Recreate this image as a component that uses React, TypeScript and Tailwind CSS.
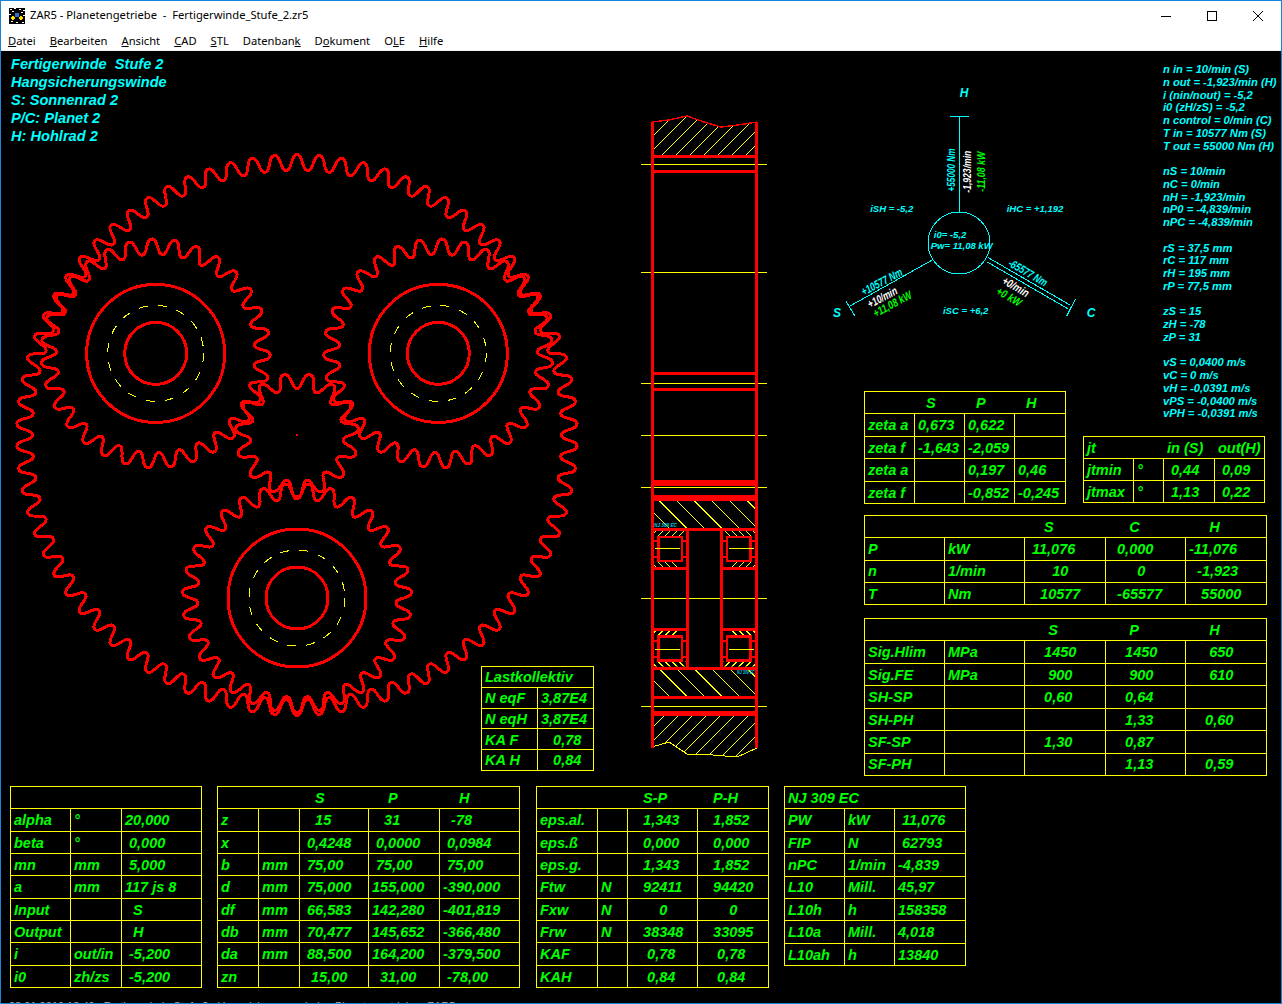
const RED = '#ff0000';
const YEL = '#ffff00';
const CYAN = '#00ffff';
const GREEN = '#00ff00';

const menu = [
  ['D', 'atei', ''],
  ['B', 'earbeiten', ''],
  ['A', 'nsicht', ''],
  ['C', 'AD', ''],
  ['S', 'TL', ''],
  ['', 'Datenban', 'k'],
  ['', 'D', 'o', 'kument'],
  ['', 'O', 'L', 'E'],
  ['H', 'ilfe', ''],
];

const info = [
  'n in = 10/min (S)', 'n out = -1,923/min (H)', 'i (nin/nout) = -5,2', 'i0 (zH/zS) = -5,2', 'n control = 0/min (C)',
  'T in = 10577 Nm (S)', 'T out = 55000 Nm (H)', '',
  'nS = 10/min', 'nC = 0/min', 'nH = -1,923/min', 'nP0 = -4,839/min', 'nPC = -4,839/min', '',
  'rS = 37,5 mm', 'rC = 117 mm', 'rH = 195 mm', 'rP = 77,5 mm', '',
  'zS = 15', 'zH = -78', 'zP = 31', '',
  'vS = 0,0400 m/s', 'vC = 0 m/s', 'vH = -0,0391 m/s', 'vPS = -0,0400 m/s', 'vPH = -0,0391 m/s',
];

// gear outline, tipDeg = direction of the largest radius (svg coords)
function gearPath(cx: number, cy: number, z: number, rMin: number, rMax: number, tipDeg: number) {
  const mid = (rMin + rMax) / 2;
  const amp = (rMax - rMin) / 2;
  const t0 = (tipDeg * Math.PI) / 180;
  const n = z * 20;
  let d = '';
  for (let i = 0; i <= n; i++) {
    const a = (i / n) * Math.PI * 2;
    const c = Math.cos(z * (a - t0));
    const r = mid + amp * (Math.tanh(1.2 * c) / Math.tanh(1.2));
    d += `${i ? 'L' : 'M'}${(cx + r * Math.cos(a)).toFixed(2)} ${(cy + r * Math.sin(a)).toFixed(2)}`;
  }
  return d + 'Z';
}

function Planet({ x, y, tip }: { x: number; y: number; tip: number }) {
  return (
    <g>
      <path d={gearPath(x, y, 31, 99.2, 114.5, tip)} fill="none" stroke={RED} strokeWidth={3} />
      <circle cx={x} cy={y} r={69} fill="none" stroke={RED} strokeWidth={3} />
      <circle cx={x} cy={y} r={31} fill="none" stroke={RED} strokeWidth={3} />
      <circle cx={x} cy={y} r={48} fill="none" stroke={YEL} strokeWidth={1} strokeDasharray="9 10" />
    </g>
  );
}

function Gears() {
  return (
    <svg viewBox="1 51 639 735" className="block w-[639px] h-[735px]" shapeRendering="crispEdges">
      <path d={gearPath(297, 435, 78, 264.7, 280.3, 90)} fill="none" stroke={RED} strokeWidth={3} />
      <path d={gearPath(297, 435, 15, 46.4, 61.7, 90)} fill="none" stroke={RED} strokeWidth={3} />
      <Planet x={155.7} y={353.4} tip={210} />
      <Planet x={438.3} y={353.4} tip={330} />
      <Planet x={297} y={598} tip={90} />
      <rect x={296} y={434} width={2} height={2} fill={RED} />
    </svg>
  );
}

// hatch lines: dir 1 = "/", dir -1 = "\"
function Hatch({ clip, from, step, count, dir }: { clip: string; from: number; step: number; count: number; dir: 1 | -1 }) {
  const lines = [];
  for (let i = 0; i < count; i++) {
    const c = from + i * step;
    lines.push(
      dir === 1 ? (
        <line key={i} x1={640} y1={c - 640} x2={770} y2={c - 770} />
      ) : (
        <line key={i} x1={640} y1={c + 640} x2={770} y2={c + 770} />
      ),
    );
  }
  return (
    <g clipPath={`url(#${clip})`} stroke={YEL} strokeWidth={1}>
      {lines}
    </g>
  );
}

function Bearing() {
  return (
    <g>
      <Hatch clip="bTop" from={1180} step={7} count={8} dir={1} />
      <Hatch clip="bBot" from={-110} step={7} count={8} dir={-1} />
      <rect x={658.7} y={537} width={23.2} height={24} fill="none" stroke={RED} strokeWidth={2.8} />
      <rect x={654} y={539.5} width={4} height={2.4} fill={RED} />
      <rect x={654} y={555.5} width={4} height={2.6} fill={RED} />
      <rect x={682} y={539.5} width={4} height={2.4} fill={RED} />
      <rect x={682} y={555.5} width={4} height={2.6} fill={RED} />
      <rect x={654} y={567} width={33} height={2.6} fill={RED} />
      <line x1={655} y1={548.5} x2={680} y2={548.5} stroke={YEL} strokeWidth={1} />
    </g>
  );
}

function Section() {
  const thick = [
    [155, 3], [170, 3], [372, 3], [388, 3], [480, 6], [495, 6], [528, 3], [667, 3], [696, 3], [711, 5],
  ];
  return (
    <svg viewBox="640 51 180 735" className="block w-[180px] h-[735px]" shapeRendering="crispEdges">
      <defs>
        <clipPath id="topRing"><polygon points="654,122 669,120 687,116 704,122 721,127 738,125 755,122 755,155 654,155" /></clipPath>
        <clipPath id="botRing"><polygon points="654,716 755,716 755,748 737,757 713,755 687,754 669,742 654,747" /></clipPath>
        <clipPath id="carTop"><rect x={654} y={501} width={101} height={27} /></clipPath>
        <clipPath id="carBot"><rect x={654} y={670} width={101} height={26} /></clipPath>
        <clipPath id="bTop"><rect x={654} y={531} width={32} height={5} /></clipPath>
        <clipPath id="bBot"><rect x={654} y={562} width={32} height={5} /></clipPath>
      </defs>
      <Hatch clip="topRing" from={775} step={14} count={14} dir={1} />
      <Hatch clip="botRing" from={1366} step={14} count={14} dir={1} />
      <Hatch clip="carTop" from={-264} step={17.6} count={8} dir={-1} />
      <Hatch clip="carBot" from={-96} step={17.6} count={8} dir={-1} />
      <polyline points="652,122 669,120 687,116 704,122 721,127 738,125 757,122" fill="none" stroke={RED} strokeWidth={1.4} />
      <polyline points="652,747 669,742 687,754 713,755 737,757 757,748" fill="none" stroke={YEL} strokeWidth={1} />
      {[164, 272, 383, 435, 487, 598, 706].map(y => (
        <line key={y} x1={641} y1={y + 0.5} x2={767} y2={y + 0.5} stroke={YEL} strokeWidth={1} />
      ))}
      <rect x={651} y={122} width={3} height={626} fill={RED} />
      <rect x={755} y={122} width={3} height={626} fill={RED} />
      {thick.map(([y, h]) => (
        <rect key={y} x={654} y={y} width={101} height={h} fill={RED} />
      ))}
      <rect x={686} y={529} width={3} height={140} fill={RED} />
      <rect x={720} y={529} width={3} height={140} fill={RED} />
      <Bearing />
      <g transform="translate(1409 0) scale(-1 1)"><Bearing /></g>
      <g transform="translate(0 1197.6) scale(1 -1)"><Bearing /></g>
      <g transform="translate(1409 1197.6) scale(-1 -1)"><Bearing /></g>
      <text x={654} y={527} fill="#00c8e0" fontSize={5} fontWeight={700} fontStyle="italic" textLength={23} lengthAdjust="spacingAndGlyphs">NJ 309 EC</text>
      <text x={737} y={674} fill="#00c8e0" fontSize={4.5} fontWeight={700} fontStyle="italic" textLength={18} lengthAdjust="spacingAndGlyphs">NJ 309 EC</text>
    </svg>
  );
}

function Rot({ x, y, rot, fill, len, children }: { x: number; y: number; rot: number; fill: string; len: number; children: string }) {
  return (
    <text
      transform={`translate(${x} ${y}) rotate(${rot})`}
      textAnchor="middle"
      dominantBaseline="central"
      fill={fill}
      fontSize={11.5}
      fontWeight={700}
      fontStyle="italic"
      textLength={len}
      lengthAdjust="spacingAndGlyphs"
    >
      {children}
    </text>
  );
}

function Label({ x, y, size = 9.5, children }: { x: number; y: number; size?: number; children: string }) {
  return (
    <text x={x} y={y} textAnchor="middle" dominantBaseline="central" fill={CYAN} fontSize={size} fontWeight={700} fontStyle="italic">
      {children}
    </text>
  );
}

function Diagram() {
  return (
    <svg viewBox="820 51 340 340" className="block w-[340px] h-[340px] shrink-0 overflow-visible">
      <g stroke={CYAN} strokeWidth={1} fill="none" shapeRendering="crispEdges">
        <circle cx={959} cy={243} r={31} />
        <line x1={959.5} y1={116} x2={959.5} y2={212} />
        <line x1={950} y1={116.5} x2={969} y2={116.5} />
        <line x1={931.7} y1={260.3} x2={850} y2={306} />
        <line x1={845.7} y1={300.7} x2={855} y2={316} />
        <line x1={988.3} y1={257.7} x2={1070} y2={305} />
        <line x1={986.7} y1={261.7} x2={1068.3} y2={309} />
        <line x1={1075.3} y1={299.3} x2={1066.7} y2={316} />
      </g>
      <Label x={964} y={93} size={12}>H</Label>
      <Label x={837} y={313} size={12}>S</Label>
      <Label x={1091} y={313} size={12}>C</Label>
      <Label x={891.7} y={208.7}>iSH = -5,2</Label>
      <Label x={1035} y={208.7}>iHC = +1,192</Label>
      <Label x={965.7} y={310.7}>iSC = +6,2</Label>
      <Label x={950} y={234.7}>i0= -5,2</Label>
      <Label x={961.7} y={245.7}>Pw= 11,08 kW</Label>
      <Rot x={951} y={170} rot={-90} fill={CYAN} len={43}>+55000 Nm</Rot>
      <Rot x={966.7} y={171.7} rot={-90} fill="#ffffff" len={42}>-1,923/min</Rot>
      <Rot x={980.7} y={171.7} rot={-90} fill={GREEN} len={40}>-11,08 kW</Rot>
      <Rot x={881.7} y={281.7} rot={-28} fill={CYAN} len={45}>+10577 Nm</Rot>
      <Rot x={882.3} y={297.3} rot={-28} fill="#ffffff" len={32}>+10/min</Rot>
      <Rot x={892.3} y={304} rot={-28} fill={GREEN} len={42}>+11,08 kW</Rot>
      <Rot x={1028} y={272.7} rot={30} fill={CYAN} len={43}>-65577 Nm</Rot>
      <Rot x={1015.7} y={286.7} rot={30} fill="#ffffff" len={29}>+0/min</Rot>
      <Rot x={1009} y={296.7} rot={30} fill={GREEN} len={27}>+0 kW</Rot>
    </svg>
  );
}

function DataTable({ className, cols, rows }: { className: string; cols: string; rows: string[][] }) {
  return (
    <div className={`flex flex-col shrink-0 border border-[#ffff00] text-[#00ff00] text-[14.5px] font-bold italic ${className}`}>
      {rows.map((row, i) => (
        <div key={i} className={`grid flex-1 min-h-0 ${cols} ${i < rows.length - 1 ? 'border-b border-[#ffff00]' : ''}`}>
          {row.map((cell, j) => (
            <div
              key={j}
              className={`flex items-center pl-[3px] pt-px whitespace-pre leading-none ${i > 0 && j < row.length - 1 ? 'border-r border-[#ffff00]' : ''}`}
            >
              {cell}
            </div>
          ))}
        </div>
      ))}
    </div>
  );
}

function AppIcon() {
  return (
    <svg viewBox="0 0 16 16" className="w-4 h-4 shrink-0" shapeRendering="crispEdges">
      <rect width={16} height={16} fill="#000000" />
      {[[1, 1], [5, 0], [10, 1], [14, 2], [0, 6], [14, 7], [2, 13], [7, 14], [13, 14], [3, 3], [12, 4]].map(([x, y]) => (
        <rect key={`${x}-${y}`} x={x} y={y} width={2} height={1} fill="#ffffff" />
      ))}
      <circle cx={8} cy={7} r={2.5} fill="#2f6fd0" />
      <circle cx={4} cy={10} r={1.8} fill="#ffe000" />
      <circle cx={12} cy={10} r={1.8} fill="#ffe000" />
    </svg>
  );
}

export default function App() {
  return (
    <div className="w-[1282px] h-[1004px] flex flex-col border border-[#1883d7] bg-black overflow-hidden font-['Liberation_Sans',sans-serif]">
      {/* title bar */}
      <div className="h-[29px] shrink-0 bg-white flex items-center pl-2 font-['Noto_Sans',sans-serif] text-[11.2px] text-black">
        <AppIcon />
        <span className="ml-[5px] whitespace-pre">ZAR5 - Planetengetriebe  -  Fertigerwinde_Stufe_2.zr5</span>
        <div className="ml-auto flex">
          <div className="w-[46px] h-[29px] flex items-center justify-center">
            <svg width="10" height="10" viewBox="0 0 10 10" shapeRendering="crispEdges"><line x1="0" y1="5.5" x2="10" y2="5.5" stroke="#000" /></svg>
          </div>
          <div className="w-[46px] h-[29px] flex items-center justify-center">
            <svg width="10" height="10" viewBox="0 0 10 10" shapeRendering="crispEdges"><rect x="0.5" y="0.5" width="9" height="9" fill="none" stroke="#000" /></svg>
          </div>
          <div className="w-[46px] h-[29px] flex items-center justify-center">
            <svg width="10" height="10" viewBox="0 0 10 10"><path d="M0 0L10 10M10 0L0 10" fill="none" stroke="#000" strokeWidth="1" /></svg>
          </div>
        </div>
      </div>
      {/* menu */}
      <div className="h-[21px] shrink-0 bg-white border-b border-[#f0f0f0] flex items-center gap-[14px] pl-[7px] pt-[2px] font-['Noto_Sans',sans-serif] text-[11.2px] text-black">
        {menu.map(m => (
          <span key={m.join('')}>
            {m[0] && <span className="underline">{m[0]}</span>}
            {m[1]}
            {m[2] && <span className="underline">{m[2]}</span>}
            {m[3]}
          </span>
        ))}
      </div>

      <div className="flex-1 min-h-0 flex flex-col">
        <div className="h-[735px] shrink-0 flex">
          {/* gears */}
          <div className="relative w-[639px] shrink-0">
            <Gears />
            <div className="absolute left-[10px] top-[4px] text-[#00ffff] text-[14.6px] leading-[18px] font-bold italic whitespace-pre">
              <div>Fertigerwinde  Stufe 2</div>
              <div>Hangsicherungswinde</div>
              <div>S: Sonnenrad 2</div>
              <div>P/C: Planet 2</div>
              <div>H: Hohlrad 2</div>
            </div>
            <DataTable
              className="absolute left-[480px] top-[615px] w-[113px] h-[105px]"
              cols="grid-cols-[56px_55px]"
              rows={[
                ['Lastkollektiv', ''],
                ['N eqF', '3,87E4'],
                ['N eqH', '3,87E4'],
                ['KA F', '   0,78'],
                ['KA H', '   0,84'],
              ]}
            />
          </div>
          <Section />
          {/* right column */}
          <div className="w-[461px] shrink-0 flex flex-col">
            <div className="h-[340px] shrink-0 flex">
              <Diagram />
              <div className="ml-[3px] mt-[12px] text-[#00ffff] text-[11.2px] leading-[12.75px] font-bold italic whitespace-pre">
                {info.map((line, i) => (
                  <div key={i} className="h-[12.75px]">{line}</div>
                ))}
              </div>
            </div>
            <div className="flex items-start pl-[44px]">
              <DataTable
                className="w-[202px] h-[113px]"
                cols="grid-cols-[50px_50px_50px_50px]"
                rows={[
                  ['', '  S', '  P', '  H'],
                  ['zeta a', '0,673', '0,622', ''],
                  ['zeta f', '-1,643', '-2,059', ''],
                  ['zeta a', '', '0,197', '0,46'],
                  ['zeta f', '', '-0,852', '-0,245'],
                ]}
              />
              <DataTable
                className="ml-[17px] mt-[45px] w-[182px] h-[67px]"
                cols="grid-cols-[50px_30px_51px_49px]"
                rows={[
                  ['jt', '', 'in (S)', 'out(H)'],
                  ['jtmin', '°', ' 0,44', ' 0,09'],
                  ['jtmax', '°', ' 1,13', ' 0,22'],
                ]}
              />
            </div>
            <DataTable
              className="ml-[44px] mt-[11px] w-[403px] h-[90px]"
              cols="grid-cols-[80px_80px_81px_80px_80px]"
              rows={[
                ['', '', '    S', '     C', '     H'],
                ['P', 'kW', ' 11,076', '  0,000', '-11,076'],
                ['n', '1/min', '      10', '       0', '  -1,923'],
                ['T', 'Nm', '   10577', '  -65577', '   55000'],
              ]}
            />
            <DataTable
              className="ml-[44px] mt-[13px] w-[403px] h-[158px]"
              cols="grid-cols-[80px_80px_81px_80px_80px]"
              rows={[
                ['', '', '     S', '     P', '     H'],
                ['Sig.Hlim', 'MPa', '    1450', '    1450', '     650'],
                ['Sig.FE', 'MPa', '     900', '     900', '     610'],
                ['SH-SP', '', '    0,60', '    0,64', ''],
                ['SH-PH', '', '', '    1,33', '    0,60'],
                ['SF-SP', '', '    1,30', '    0,87', ''],
                ['SF-PH', '', '', '    1,13', '    0,59'],
              ]}
            />
          </div>
        </div>

        {/* bottom tables */}
        <div className="flex items-start pl-[9px]">
          <DataTable
            className="w-[192px] h-[202px]"
            cols="grid-cols-[60px_51px_79px]"
            rows={[
              ['', '', ''],
              ['alpha', '°', '20,000'],
              ['beta', '°', ' 0,000'],
              ['mn', 'mm', ' 5,000'],
              ['a', 'mm', '117 js 8'],
              ['Input', '', '  S'],
              ['Output', '', '  H'],
              ['i', 'out/in', ' -5,200'],
              ['i0', 'zh/zs', ' -5,200'],
            ]}
          />
          <DataTable
            className="ml-[15px] w-[303px] h-[202px]"
            cols="grid-cols-[41px_41px_69px_71px_79px]"
            rows={[
              ['', '', '   S', '    P', '    H'],
              ['z', '', '   15', '   31', '  -78'],
              ['x', '', ' 0,4248', ' 0,0000', ' 0,0984'],
              ['b', 'mm', ' 75,00', ' 75,00', ' 75,00'],
              ['d', 'mm', ' 75,000', '155,000', '-390,000'],
              ['df', 'mm', ' 66,583', '142,280', '-401,819'],
              ['db', 'mm', ' 70,477', '145,652', '-366,480'],
              ['da', 'mm', ' 88,500', '164,200', '-379,500'],
              ['zn', '', '  15,00', '  31,00', ' -78,00'],
            ]}
          />
          <DataTable
            className="ml-[16px] w-[233px] h-[202px]"
            cols="grid-cols-[61px_30px_70px_70px]"
            rows={[
              ['', '', '   S-P', '   P-H'],
              ['eps.al.', '', '   1,343', '   1,852'],
              ['eps.ß', '', '   0,000', '   0,000'],
              ['eps.g.', '', '   1,343', '   1,852'],
              ['Ftw', 'N', '   92411', '   94420'],
              ['Fxw', 'N', '       0', '       0'],
              ['Frw', 'N', '   38348', '   33095'],
              ['KAF', '', '    0,78', '    0,78'],
              ['KAH', '', '    0,84', '    0,84'],
            ]}
          />
          <DataTable
            className="ml-[15px] w-[182px] h-[180px]"
            cols="grid-cols-[60px_50px_70px]"
            rows={[
              ['NJ 309 EC', '', ''],
              ['PW', 'kW', ' 11,076'],
              ['FIP', 'N', ' 62793'],
              ['nPC', '1/min', '-4,839'],
              ['L10', 'Mill.', '45,97'],
              ['L10h', 'h', '158358'],
              ['L10a', 'Mill.', '4,018'],
              ['L10ah', 'h', '13840'],
            ]}
          />
        </div>

        {/* cut-off status line at the bottom edge */}
        <div className="mt-auto h-[2px] pl-[8px] overflow-hidden text-[#b0b0b0] text-[11px] leading-[11px] whitespace-pre">
          28.01.2019 13:49   Fertigerwinde Stufe 2   Hangsicherungswinde   Planetengetriebe   ZAR5
        </div>
      </div>
    </div>
  );
}
